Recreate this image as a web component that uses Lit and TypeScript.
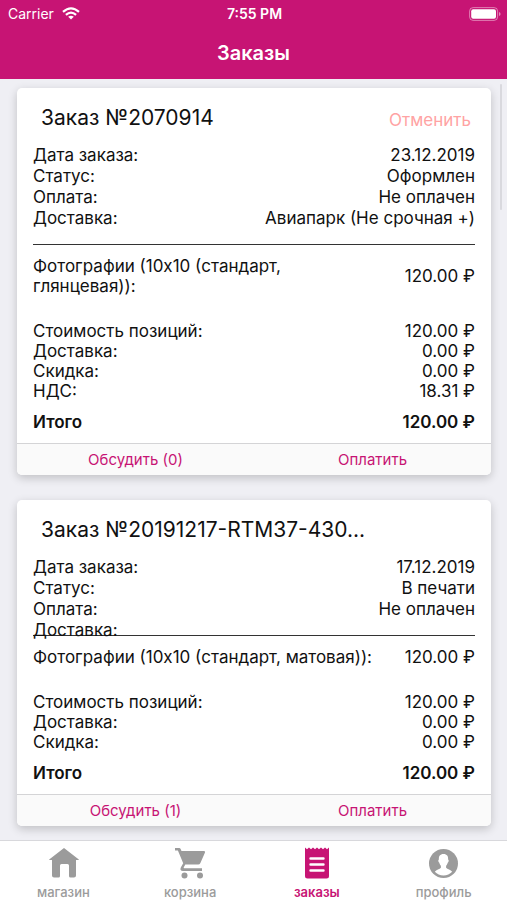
import { LitElement, html, css, svg, nothing } from "lit";
import { customElement, property } from "lit/decorators.js";
import { classMap } from "lit/directives/class-map.js";

interface Order {
  title: string;
  cancellable: boolean;
  details: [string, string][];
  item: [string, string];
  sums: [string, string][];
  total: string;
  messages: number;
}

const orders: Order[] = [
  {
    title: "Заказ №2070914",
    cancellable: true,
    details: [
      ["Дата заказа:", "23.12.2019"],
      ["Статус:", "Оформлен"],
      ["Оплата:", "Не оплачен"],
      ["Доставка:", "Авиапарк (Не срочная +)"],
    ],
    item: ["Фотографии (10x10 (стандарт, глянцевая)):", "120.00 ₽"],
    sums: [
      ["Стоимость позиций:", "120.00 ₽"],
      ["Доставка:", "0.00 ₽"],
      ["Скидка:", "0.00 ₽"],
      ["НДС:", "18.31 ₽"],
    ],
    total: "120.00 ₽",
    messages: 0,
  },
  {
    title: "Заказ №20191217-RTM37-430...",
    cancellable: false,
    details: [
      ["Дата заказа:", "17.12.2019"],
      ["Статус:", "В печати"],
      ["Оплата:", "Не оплачен"],
      ["Доставка:", ""],
    ],
    item: ["Фотографии (10x10 (стандарт, матовая)):", "120.00 ₽"],
    sums: [
      ["Стоимость позиций:", "120.00 ₽"],
      ["Доставка:", "0.00 ₽"],
      ["Скидка:", "0.00 ₽"],
    ],
    total: "120.00 ₽",
    messages: 1,
  },
];

const icons = {
  shop: svg`<path d="M17 1 31.500 12.200q.8.800-.3.800H29v15.500q0 2-2 2h-3.500q-1.500 0-1.500-1.500V18.500q0-1.500-1.500-1.500h-2.500q-1.500 0-1.500 0h-2q-1.500 0-1.500 1.500V29q0 1.500-1.500 1.500H7q-2 0-2-2V13H2.800q-1.100 0-.3-.8z"/>`,
  cart: svg`<path d="M1 1h4.200q1 0 1.400.9l.9 2H30q1.600 0 1 1.500l-4.600 10.600q-.7 1.500-2.300 1.500H11.300l-1.600 3q-.3.8.6.8h17.700v2.700H9q-3.600-.3-2.200-3.600l2.400-4.200L3.900 3.600H1z"/><circle cx="10.500" cy="28.500" r="3"/><circle cx="26" cy="28.500" r="3"/>`,
  orders: svg`<path d="M4 .5l2 1.700L8 .5l2 1.700L12 .5l2 1.700L16 .5l2 1.700L20 .5l2 1.700L24 .5l2 1.700L28 .5V29q0 2.500-2.500 2.500h-19Q4 31.500 4 29z"/><path d="M9.500 11.500h13M9.500 17.500h13M9.500 23.500h13" stroke="#fff" stroke-width="2.400" stroke-linecap="round"/>`,
  profile: svg`<circle cx="15.500" cy="16.500" r="14.500"/><path d="M15.500 7c3.500 0 4.900 2.300 4.600 5.500 1 .2.700 2.700-.4 3.200-.4 1.500-.9 2.300-1.600 3v2c1.200 1.700 4.700 1.900 6.100 4.100-2.300 2.400-5.200 3.700-8.700 3.700s-6.400-1.300-8.700-3.700c1.400-2.200 4.900-2.400 6.100-4.100v-2c-.7-.7-1.200-1.500-1.600-3-1.100-.5-1.400-3-.4-3.200C10.600 9.300 12 7 15.500 7z" fill="#fff"/>`,
};

@customElement("order-card")
class OrderCard extends LitElement {
  @property({ attribute: false }) order!: Order;

  static styles = css`
    :host {
      display: block;
      background: #fff;
      border-radius: 5px;
      box-shadow: 0 3px 10px rgba(0, 0, 0, 0.2);
    }
    .head {
      display: flex;
      justify-content: space-between;
      align-items: center;
      box-sizing: border-box;
      height: 57px;
      padding: 2px 20px 0 24px;
    }
    h2 {
      margin: 0;
      font-size: 21px;
      line-height: 28px;
      font-weight: 400;
      white-space: nowrap;
    }
    button {
      border: 0;
      padding: 0;
      background: none;
      font-family: inherit;
      cursor: pointer;
    }
    .cancel {
      padding-top: 4px;
      font-size: 17px;
      line-height: 20px;
      color: #ffa3a3;
    }
    dl {
      margin: 0;
    }
    dt,
    dd {
      margin: 0;
    }
    .body {
      padding: 0 16px 11px;
    }
    .row {
      display: flex;
      justify-content: space-between;
      align-items: center;
      line-height: 20px;
    }
    .row dd {
      white-space: nowrap;
    }
    .details {
      padding-bottom: 15px;
      border-bottom: 1px solid #333;
    }
    .details .row {
      height: 21px;
      line-height: 21px;
    }
    .details .blank {
      height: 0;
      align-items: flex-start;
    }
    .item {
      padding: 11px 0 25px;
    }
    .item dt {
      max-width: 350px;
    }
    .total {
      margin-top: 11px;
      font-weight: 600;
    }
    .foot {
      display: grid;
      grid-template-columns: 1fr 1fr;
      border-top: 1px solid #d4d4d6;
      border-radius: 0 0 5px 5px;
      background: #fafafa;
    }
    .foot button {
      height: 31px;
      font-size: 15px;
      line-height: 20px;
      color: #c71474;
    }
  `;

  row([label, value]: [string, string], bold = false) {
    return html`<div class=${classMap({ row: true, blank: !value, total: bold })}>
      <dt>${label}</dt>
      <dd>${value}</dd>
    </div>`;
  }

  render() {
    const o = this.order;
    return html`
      <div class="head">
        <h2>${o.title}</h2>
        ${o.cancellable ? html`<button class="cancel">Отменить</button>` : nothing}
      </div>
      <div class="body">
        <dl class="details">${o.details.map((d) => this.row(d))}</dl>
        <dl class="item">${this.row(o.item)}</dl>
        <dl>${o.sums.map((s) => this.row(s))} ${this.row(["Итого", o.total], true)}</dl>
      </div>
      <div class="foot">
        <button>Обсудить (${o.messages})</button>
        <button>Оплатить</button>
      </div>
    `;
  }
}

@customElement("app-root")
class AppRoot extends LitElement {
  static styles = css`
    :host {
      display: flex;
      flex-direction: column;
      position: relative;
      height: 100vh;
      background: #efeff4;
      color: #111;
      font-family: Inter, "Liberation Sans", sans-serif;
      font-size: 17px;
    }
    header {
      flex: none;
      background: #c71474;
      color: #fff;
    }
    .status {
      display: grid;
      grid-template-columns: 1fr auto 1fr;
      align-items: center;
      height: 27px;
      padding: 0 6px 0 8px;
      font-size: 14px;
    }
    .carrier {
      display: flex;
      align-items: center;
      gap: 8px;
    }
    .time {
      font-weight: 600;
    }
    .battery {
      justify-self: end;
    }
    svg {
      display: block;
    }
    h1 {
      margin: 0;
      height: 52px;
      font-size: 20px;
      line-height: 52px;
      font-weight: 600;
      text-align: center;
    }
    main {
      flex: 1;
      min-height: 0;
      box-sizing: border-box;
      display: flex;
      flex-direction: column;
      gap: 25px;
      padding: 9px 16px 15px 17px;
      overflow-y: auto;
      scrollbar-width: none;
    }
    order-card {
      flex: none;
    }
    .scroll {
      position: absolute;
      top: 84px;
      right: 5px;
      width: 2px;
      height: 126px;
      border-radius: 1px;
      background: #d9d9de;
    }
    nav {
      flex: none;
      display: grid;
      grid-template-columns: repeat(4, 1fr);
      height: 59px;
      background: #fff;
      border-top: 1px solid #d8d8dc;
    }
    a {
      display: flex;
      flex-direction: column;
      align-items: center;
      gap: 4px;
      padding-top: 6px;
      font-size: 13px;
      line-height: 16px;
      font-weight: 500;
      color: #9b9b9b;
      text-decoration: none;
    }
    .active {
      color: #c71474;
      font-weight: 600;
    }
  `;

  tab(label: string, icon: unknown, active = false) {
    return html`<a href="#" class=${classMap({ active })} aria-current=${active ? "page" : nothing}>
      <svg width="32" height="33" viewBox="0 0 32 33" fill="currentColor" aria-hidden="true">${icon}</svg>
      ${label}
    </a>`;
  }

  render() {
    return html`
      <header>
        <div class="status">
          <div class="carrier">
            Carrier
            <svg width="18" height="13" viewBox="0 0 18 13" fill="none" stroke="#fff" stroke-width="2.200">
              <path d="M1 4.800Q9-2.200 17 4.800M3.900 7.900Q9 3.500 14.100 7.900" />
              <path d="M9 12.600 6.200 9.800Q9 7.600 11.800 9.800Z" fill="#fff" stroke="none" />
            </svg>
          </div>
          <div class="time">7:55 PM</div>
          <svg class="battery" width="32" height="14" viewBox="0 0 32 14">
            <rect x=".6" y=".6" width="28" height="12.800" rx="3.500" fill="none" stroke="#fff" stroke-opacity=".45" />
            <rect x="2.200" y="2.200" width="24.800" height="9.600" rx="2" fill="#fff" />
            <path d="M30 5q1.600.6 1.600 2T30 9z" fill="#fff" fill-opacity=".5" />
          </svg>
        </div>
        <h1>Заказы</h1>
      </header>
      <main>${orders.map((o) => html`<order-card .order=${o}></order-card>`)}</main>
      <div class="scroll"></div>
      <nav>
        ${this.tab("магазин", icons.shop)} ${this.tab("корзина", icons.cart)}
        ${this.tab("заказы", icons.orders, true)} ${this.tab("профиль", icons.profile)}
      </nav>
    `;
  }
}
